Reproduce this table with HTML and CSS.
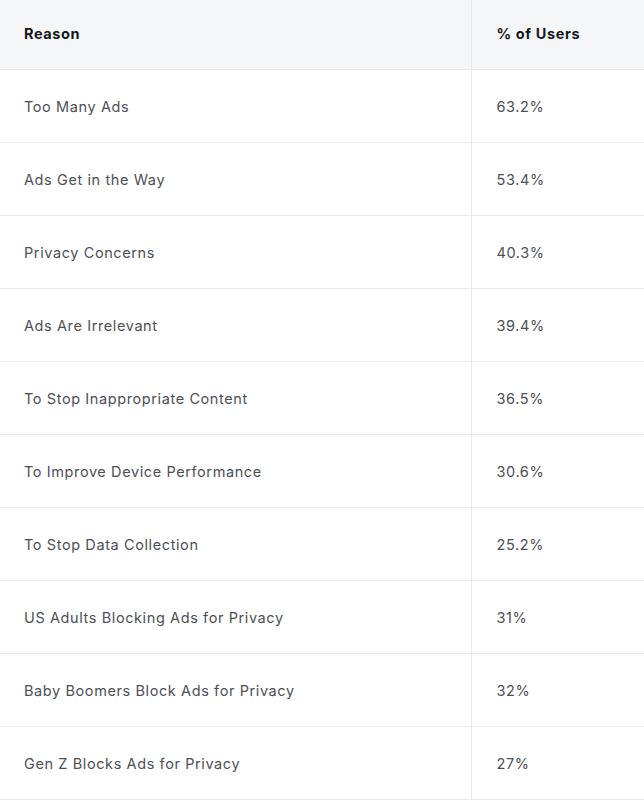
FILE: index.html
```html
<!DOCTYPE html>
<html>
<head>
<meta charset="utf-8">
<link rel="stylesheet" href="styles.css">
</head>
<body>
<table class="data">
  <thead>
    <tr><th class="c1">Reason</th><th class="c2">% of Users</th></tr>
  </thead>
  <tbody>
    <tr><td class="c1">Too Many Ads</td><td class="c2">63.2%</td></tr>
    <tr><td class="c1">Ads Get in the Way</td><td class="c2">53.4%</td></tr>
    <tr><td class="c1">Privacy Concerns</td><td class="c2">40.3%</td></tr>
    <tr><td class="c1">Ads Are Irrelevant</td><td class="c2">39.4%</td></tr>
    <tr><td class="c1">To Stop Inappropriate Content</td><td class="c2">36.5%</td></tr>
    <tr><td class="c1">To Improve Device Performance</td><td class="c2">30.6%</td></tr>
    <tr><td class="c1">To Stop Data Collection</td><td class="c2">25.2%</td></tr>
    <tr><td class="c1">US Adults Blocking Ads for Privacy</td><td class="c2">31%</td></tr>
    <tr><td class="c1">Baby Boomers Block Ads for Privacy</td><td class="c2">32%</td></tr>
    <tr><td class="c1">Gen Z Blocks Ads for Privacy</td><td class="c2">27%</td></tr>
  </tbody>
</table>
</body>
</html>
```
FILE: styles.css
```css
html, body {
  margin: 0;
  padding: 0;
  background: #ffffff;
}
body {
  font-family: Inter, "Noto Sans", sans-serif;
}
.data {
  width: 644px;
  border-collapse: collapse;
  table-layout: fixed;
}
.data th, .data td {
  box-sizing: border-box;
  text-align: left;
  padding: 0 24px;
  border-bottom: 1px solid #e8e9eb;
  font-size: 14.5px;
  line-height: 20px;
  letter-spacing: 0.6px;
}
.data .c1 { width: 471px; }
.data .c2 {
  border-left: 1px solid #e8e9eb;
  padding-left: 25px;
}
.data th {
  height: 69px;
  background: #f5f6f8;
  color: #16171a;
  font-weight: 700;
}
.data td {
  height: 73px;
  padding-top: 2px;
  color: #4d4f55;
  font-weight: 400;
}
```
